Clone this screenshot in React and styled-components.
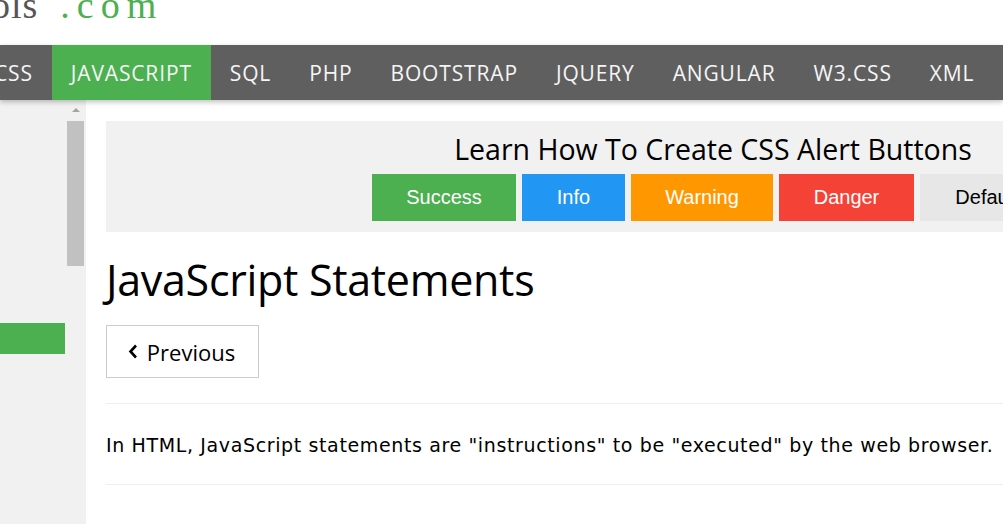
import React from 'react';
import styled, { createGlobalStyle } from 'styled-components';

const GlobalStyle = createGlobalStyle`
  html, body {
    margin: 0;
    padding: 0;
    background: #fff;
    overflow: hidden;
  }
  body {
    width: 1003px;
    height: 524px;
  }
`;

const Page = styled.div`
  width: 1003px;
  height: 524px;
  overflow: hidden;
  display: flex;
  flex-direction: column;
`;

const Header = styled.div`
  height: 45px;
  flex: none;
  overflow: hidden;
`;

const Logo = styled.div`
  font-family: "Liberation Serif", serif;
  font-size: 38px;
  line-height: 1;
  letter-spacing: 1px;
  color: #555;
  white-space: nowrap;
  margin-top: -14px;
  margin-left: -9px;

  span {
    color: #4caf50;
    letter-spacing: 7px;
    margin-left: 22px;
  }
`;

const Nav = styled.nav`
  height: 55px;
  flex: none;
  background: #5f5f5f;
  box-shadow: 0 2px 5px rgba(0, 0, 0, 0.25);
  display: flex;
  position: relative;
  z-index: 2;
  overflow: hidden;
`;

const NavList = styled.div`
  display: flex;
  margin-left: -25px;
`;

const NavItem = styled.a`
  display: flex;
  align-items: center;
  padding: 0 19px;
  font-family: "Open Sans", sans-serif;
  font-size: 21px;
  letter-spacing: 0.85px;
  color: #f5f5f5;
  background: ${p => (p.$active ? '#4caf50' : 'transparent')};
  white-space: nowrap;
  text-decoration: none;
`;

const Body = styled.div`
  flex: 1;
  display: flex;
  min-height: 0;
`;

const Sidebar = styled.aside`
  width: 86px;
  flex: none;
  background: #f1f1f1;
  display: flex;
`;

const SideMenu = styled.div`
  width: 65px;
  padding-top: 223px;
`;

const ActiveLink = styled.div`
  height: 31px;
  background: #4caf50;
`;

const Scrollbar = styled.div`
  width: 17px;
  margin-left: 2px;
  display: flex;
  flex-direction: column;
  align-items: center;
`;

const Arrow = styled.div`
  margin-top: 8px;
  width: 0;
  height: 0;
  border-left: 4px solid transparent;
  border-right: 4px solid transparent;
  border-bottom: 4px solid #a3a3a3;
`;

const Thumb = styled.div`
  margin-top: 9px;
  width: 17px;
  height: 145px;
  background: #c1c1c1;
`;

const Main = styled.main`
  width: 1214px;
  flex: none;
  padding: 21px 0 0 20px;
`;

const AdBox = styled.div`
  background: #f1f1f1;
  height: 111px;
  display: flex;
  flex-direction: column;
  align-items: center;
`;

const AdTitle = styled.div`
  font-family: "Open Sans", sans-serif;
  font-size: 28.5px;
  color: #000;
  margin-top: 8px;
  height: 45px;
  line-height: 40px;
`;

const ButtonRow = styled.div`
  display: flex;
  gap: 6px;
`;

const AlertButton = styled.div`
  width: ${p => p.$w}px;
  height: 47px;
  display: flex;
  align-items: center;
  justify-content: center;
  font-family: "Liberation Sans", Arial, sans-serif;
  font-size: 20px;
  color: ${p => p.$fg || '#fff'};
  background: ${p => p.$bg};
`;

const Content = styled.div`
  width: 897px;
`;

const Title = styled.h1`
  margin: 21px 0 0;
  font-family: "Open Sans", sans-serif;
  font-weight: 400;
  font-size: 43px;
  line-height: 54px;
  color: #000;
  letter-spacing: -0.3px;
`;

const PrevButton = styled.div`
  margin-top: 18px;
  width: 149px;
  height: 51px;
  border: 1px solid #ccc;
  display: flex;
  align-items: center;
  justify-content: center;
  gap: 9px;
  font-family: "Open Sans", sans-serif;
  font-size: 22px;
  color: #000;
  padding-right: 2px;
`;

const Rule = styled.hr`
  border: none;
  border-top: 1px solid #eee;
  margin: ${p => p.$top}px 0 0;
  width: 1000px;
`;

const Para = styled.p`
  margin: 29px 0 27px;
  font-family: "DejaVu Sans", Verdana, sans-serif;
  font-size: 19px;
  line-height: 24px;
  color: #000;
  white-space: nowrap;
  letter-spacing: 0.63px;
`;

const ChevronLeft = () => (
  <svg width="10" height="15" viewBox="0 0 10 15" aria-hidden="true">
    <polyline points="8,1.5 2.5,7.5 8,13.5" fill="none" stroke="#000" strokeWidth="2.6" />
  </svg>
);

const navItems = ['CSS', 'JAVASCRIPT', 'SQL', 'PHP', 'BOOTSTRAP', 'JQUERY', 'ANGULAR', 'W3.CSS', 'XML', 'PYTHON'];

const buttons = [
  { label: 'Success', w: 144, bg: '#4caf50' },
  { label: 'Info', w: 103, bg: '#2196f3' },
  { label: 'Warning', w: 142, bg: '#ff9800' },
  { label: 'Danger', w: 135, bg: '#f44336' },
  { label: 'Default', w: 134, bg: '#e7e7e7', fg: '#000' },
];

export default function App() {
  return (
    <>
      <GlobalStyle />
      <Page>
        <Header>
          <Logo>ols<span>.com</span></Logo>
        </Header>
        <Nav>
          <NavList>
            {navItems.map(item => (
              <NavItem key={item} $active={item === 'JAVASCRIPT'}>{item}</NavItem>
            ))}
          </NavList>
        </Nav>
        <Body>
          <Sidebar>
            <SideMenu>
              <ActiveLink />
            </SideMenu>
            <Scrollbar>
              <Arrow />
              <Thumb />
            </Scrollbar>
          </Sidebar>
          <Main>
            <AdBox>
              <AdTitle>Learn How To Create CSS Alert Buttons</AdTitle>
              <ButtonRow>
                {buttons.map(b => (
                  <AlertButton key={b.label} $w={b.w} $bg={b.bg} $fg={b.fg}>{b.label}</AlertButton>
                ))}
              </ButtonRow>
            </AdBox>
            <Content>
              <Title>JavaScript Statements</Title>
              <PrevButton><ChevronLeft />Previous</PrevButton>
              <Rule $top={25} />
              <Para>In HTML, JavaScript statements are "instructions" to be "executed" by the web browser.</Para>
              <Rule $top={0} />
            </Content>
          </Main>
        </Body>
      </Page>
    </>
  );
}
